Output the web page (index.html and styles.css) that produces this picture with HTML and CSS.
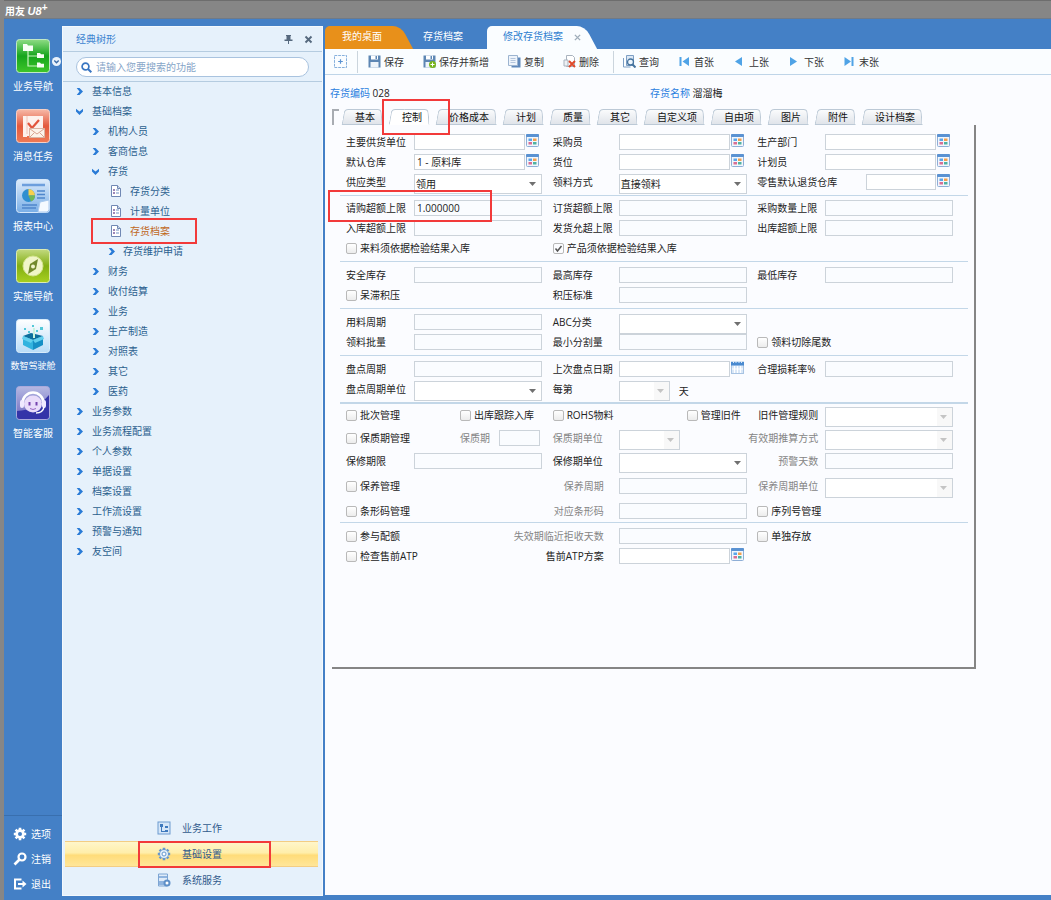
FILE: index.html
```html
<!DOCTYPE html>
<html lang="zh">
  <head>
    <meta charset="UTF-8" />
    <meta name="viewport" content="width=device-width, initial-scale=1.0" />
    <title>用友 U8+</title>
    <link rel="stylesheet" href="styles.css">
  </head>
  <body>
    <!-- 公用图标 -->
    <svg class="defs" width="0" height="0" aria-hidden="true">
      <symbol id="i-doc" viewBox="0 0 10 12">
        <path d="M.5 .5h6l3 3v8h-9z" fill="#fff" stroke="#7088b4" />
        <path d="M6.500 .5v3h3" fill="#cdd8ea" stroke="#7088b4" />
        <path d="M2 5h2M2 8h2" stroke="#7d5fa0" stroke-width="1.500" />
        <path d="M5 5h3M5 8h3" stroke="#6f92c2" />
      </symbol>
      <symbol id="i-grid" viewBox="0 0 13 13">
        <rect x=".5" y=".5" width="12" height="12" rx="1" fill="#f2f7fd" stroke="#8eaed6" />
        <rect width="13" height="3" rx="1" fill="#5a92d2" />
        <rect x="2.500" y="4.500" width="3.500" height="2.500" fill="#5aa5ea" />
        <rect x="7" y="4.500" width="3.500" height="2.500" fill="#f2a04e" />
        <rect x="2.500" y="8" width="3.500" height="2.500" fill="#d86f94" />
        <rect x="7" y="8" width="3.500" height="2.500" fill="#4fb1a2" />
      </symbol>
      <symbol id="i-save" viewBox="0 0 13 13">
        <path d="M.5 .5h12v12H.5z" fill="#5d86b3" />
        <path d="M3 .5h7v4H3z" fill="#fff" />
        <path d="M7.500 1h1.500v3H7.500z" fill="#5d86b3" />
        <path d="M2.500 7h8v5.500h-8z" fill="#eef4fa" />
      </symbol>
      <symbol id="i-gear" viewBox="0 0 14 14">
        <path d="M7 .8v12.400M.8 7h12.400M2.600 2.600l8.800 8.800M11.400 2.600l-8.800 8.800" stroke="currentColor" stroke-width="2.600" />
        <circle cx="7" cy="7" r="4.700" fill="currentColor" />
      </symbol>
    </svg>

    <header class="titlebar">用友 <b>U8<sup>+</sup></b></header>

    <div class="main">
      <!-- 左侧导航 -->
      <nav class="rail">
        <a class="rail-item" href="#">
          <svg viewBox="0 0 34 34">
            <defs>
              <linearGradient id="g1" x2="0" y2="1"><stop stop-color="#8fdc85" /><stop offset=".5" stop-color="#15a51c" /><stop offset="1" stop-color="#3fc62a" /></linearGradient>
            </defs>
            <rect x=".5" y=".5" width="33" height="33" rx="3" fill="url(#g1)" stroke="#c1e8c6" />
            <path d="M12 12v15h10M12 17h10" fill="none" stroke="#c9f5c0" stroke-width="1.200" />
            <path d="M7 5h4l1 1.500h5V12H7zM21 14h3l1 1.300h3V19h-7zM21 23.500h3l1 1.300h3v3.700h-7z" fill="#f8fff6" />
          </svg>
          <span>业务导航</span>
          <svg class="rail-more" viewBox="0 0 9 9"><circle cx="4.500" cy="4.500" r="4.500" fill="#e9f2fb" /><path d="M2.300 3.500l2.200 2.300 2.200-2.300" fill="none" stroke="#3b6ca8" stroke-width="1.400" /></svg>
        </a>
        <a class="rail-item" href="#">
          <svg viewBox="0 0 34 34">
            <defs>
              <linearGradient id="g2" x2="0" y2="1"><stop stop-color="#f7b9a8" /><stop offset=".5" stop-color="#e3593d" /><stop offset="1" stop-color="#ef7a55" /></linearGradient>
            </defs>
            <rect x=".5" y=".5" width="33" height="33" rx="3" fill="url(#g2)" stroke="#f7cfc4" />
            <path d="M7 7h4v21H7zM11 7h16v20H11z" fill="#fdf1ed" />
            <path d="M11 7v18" stroke="#f0c4b8" />
            <path d="M12 14l4 5 7-8" fill="none" stroke="#e2553d" stroke-width="2.200" />
            <path d="M13.500 19.500h15v9h-15z" fill="#fdf3ea" stroke="#d9b5a5" />
            <path d="M13.500 19.500l7.500 5.500 7.500-5.500M13.500 28.500l5-5M28.500 28.500l-5-5" fill="none" stroke="#d9a592" />
          </svg>
          <span>消息任务</span>
        </a>
        <a class="rail-item" href="#">
          <svg viewBox="0 0 34 34">
            <defs>
              <linearGradient id="g3" x2="0" y2="1"><stop stop-color="#dcebfb" /><stop offset="1" stop-color="#79aee6" /></linearGradient>
            </defs>
            <rect x=".5" y=".5" width="33" height="33" rx="3" fill="url(#g3)" stroke="#d5e7fa" />
            <path d="M6 6h23" stroke="#6d9fdd" stroke-width="2.500" />
            <path d="M21 12h8M21 15.500h8M21 19h8M6 26h15M6 29h14" stroke="#4f87cc" stroke-width="1.500" />
            <circle cx="12.500" cy="16.500" r="6.500" fill="#2f8fd0" />
            <path d="M12.500 16.500V10a6.500 6.500 0 0 1 6.500 6.500z" fill="#f7d04c" />
            <path d="M12.500 16.500H19a6.500 6.500 0 0 1-4 6z" fill="#71b855" />
            <path d="M22 33l2-10 9-2v10l-2 2z" fill="#f5faff" stroke="#a8c9ee" />
          </svg>
          <span>报表中心</span>
        </a>
        <a class="rail-item" href="#">
          <svg viewBox="0 0 34 34">
            <defs>
              <linearGradient id="g4" x2="0" y2="1"><stop stop-color="#c2d97f" /><stop offset=".5" stop-color="#82ae12" /><stop offset="1" stop-color="#a8d020" /></linearGradient>
            </defs>
            <rect x=".5" y=".5" width="33" height="33" rx="3" fill="url(#g4)" stroke="#dcebb2" />
            <circle cx="17" cy="17" r="10" fill="#f0f5c8" stroke="#d3e48e" />
            <path d="M22 10l-2 10-8 5 2-10z" fill="#71892a" />
            <circle cx="17" cy="17.500" r="2" fill="#f0f5c8" />
          </svg>
          <span>实施导航</span>
        </a>
        <a class="rail-item small" href="#">
          <svg viewBox="0 0 34 34">
            <defs>
              <linearGradient id="g5" x2="0" y2="1"><stop stop-color="#fff" /><stop offset="1" stop-color="#b9dcf7" /></linearGradient>
            </defs>
            <rect x=".5" y=".5" width="33" height="33" rx="3" fill="url(#g5)" stroke="#d8ecfb" />
            <path d="M7 17l10 4v10L7 26z" fill="#32b3df" />
            <path d="M17 21l10-4v9l-10 5z" fill="#168fc5" />
            <path d="M7 17l8-3 12 3-10 4z" fill="#0c6e9c" />
            <path d="M7 17l10 4-2 3-9-4zM27 17l-10 4 2 3 9-4z" fill="#62d0ee" />
            <path d="M8 9h2v2H8zM16 6h2v2h-2zM24 8h3v3h-3zM12 12h2v2h-2zM20 11h2v2h-2z" fill="#53c8d8" />
            <path d="M18 9v10" stroke="#c8f3dd" stroke-width="2" />
          </svg>
          <span>数智驾驶舱</span>
        </a>
        <a class="rail-item" href="#">
          <svg viewBox="0 0 34 34">
            <defs>
              <linearGradient id="g6" x2="0" y2="1"><stop stop-color="#b5b8e2" /><stop offset="1" stop-color="#6d68bf" /></linearGradient>
            </defs>
            <rect x=".5" y=".5" width="33" height="33" rx="3" fill="url(#g6)" stroke="#a9a9dc" />
            <path d="M1 25Q20 24 33 9v21q0 3-3 3H4q-3 0-3-3z" fill="#3434a8" />
            <ellipse cx="17" cy="18" rx="9" ry="8.500" fill="#e9dcfa" />
            <path d="M6.500 17a10.500 10.500 0 0 1 21 0" fill="none" stroke="#fff" stroke-width="2.500" />
            <rect x="4" y="14" width="4" height="8" rx="2" fill="#efe9ff" />
            <rect x="26" y="14" width="4" height="8" rx="2" fill="#efe9ff" />
            <path d="M13.500 16v3.500M20.500 16v3.500" stroke="#7542ae" stroke-width="2" />
            <path d="M14 22.500q3 2 6 0" fill="none" stroke="#9a68c5" />
            <path d="M28 21q-1 6-8 6" fill="none" stroke="#fff" stroke-width="1.500" />
          </svg>
          <span>智能客服</span>
        </a>
        <div class="rail-foot">
          <a href="#"><svg viewBox="0 0 14 14"><use href="#i-gear" /><circle cx="7" cy="7" r="2" fill="#4480c6" /></svg>选项</a>
          <a href="#"><svg viewBox="0 0 14 14"><circle cx="9" cy="5" r="3.500" fill="none" stroke="#fff" stroke-width="2.200" /><path d="M6.500 7.500L1.500 12.500" stroke="#fff" stroke-width="2.600" /></svg>注销</a>
          <a href="#"><svg viewBox="0 0 14 14"><path d="M8.500 2.500H2v9h6.500" fill="none" stroke="#fff" stroke-width="2" /><path d="M5 6h4.500V3.500L13.500 7l-4 3.500V8H5z" fill="#fff" /></svg>退出</a>
        </div>
      </nav>

      <!-- 功能树 -->
      <aside class="tree-panel">
        <div class="tree-head">
          <h2>经典树形</h2>
          <button type="button" aria-label="固定"><svg viewBox="0 0 9 9"><path d="M2 0h5v1H6.500v3.500H8.500V6h-8V4.500h2V1H2zM4 6h1v3H4z" fill="#56697e" /></svg></button>
          <button type="button" aria-label="关闭"><svg viewBox="0 0 9 9"><path d="M1.500 1.500l6 6M7.500 1.500l-6 6" stroke="#56697e" stroke-width="1.900" /></svg></button>
        </div>
        <div class="search">
          <label class="search-box">
            <svg viewBox="0 0 11 11"><circle cx="4.500" cy="4.500" r="3.400" fill="none" stroke="#3a76c2" stroke-width="1.700" /><path d="M7 7l3.300 3.300" stroke="#3a76c2" stroke-width="2" /></svg>
            <input type="text" aria-label="搜索功能" placeholder="请输入您要搜索的功能" />
          </label>
        </div>
        <ul class="tree">
          <li><a href="#">基本信息</a></li>
          <li class="open"><a href="#">基础档案</a>
            <ul>
              <li><a href="#">机构人员</a></li>
              <li><a href="#">客商信息</a></li>
              <li class="open"><a href="#">存货</a>
                <ul>
                  <li class="leaf"><a href="#"><svg><use href="#i-doc" /></svg>存货分类</a></li>
                  <li class="leaf"><a href="#"><svg><use href="#i-doc" /></svg>计量单位</a></li>
                  <li class="leaf current"><a href="#"><svg><use href="#i-doc" /></svg>存货档案</a><i class="mark mark-tree"></i></li>
                  <li><a href="#">存货维护申请</a></li>
                </ul>
              </li>
              <li><a href="#">财务</a></li>
              <li><a href="#">收付结算</a></li>
              <li><a href="#">业务</a></li>
              <li><a href="#">生产制造</a></li>
              <li><a href="#">对照表</a></li>
              <li><a href="#">其它</a></li>
              <li><a href="#">医药</a></li>
            </ul>
          </li>
          <li><a href="#">业务参数</a></li>
          <li><a href="#">业务流程配置</a></li>
          <li><a href="#">个人参数</a></li>
          <li><a href="#">单据设置</a></li>
          <li><a href="#">档案设置</a></li>
          <li><a href="#">工作流设置</a></li>
          <li><a href="#">预警与通知</a></li>
          <li><a href="#">友空间</a></li>
        </ul>
        <div class="groups">
          <a href="#"><svg viewBox="0 0 14 14"><rect x="1" y="1" width="12" height="12" fill="#d5e6f8" stroke="#6d9bd0" /><path d="M3 3h3v3H3zM8 5h3v2H8zM8 9h3v2H8zM4 6h1v4h3v1H4z" fill="#3e79bd" /></svg>业务工作</a>
          <a class="selected" href="#"><svg viewBox="0 0 14 14" color="#6698cf"><use href="#i-gear" /><circle cx="7" cy="7" r="4" fill="#e3eefa" /><circle cx="7" cy="7" r="2" fill="#fff" stroke="#6698cf" /></svg>基础设置<i class="mark mark-group"></i></a>
          <a href="#"><svg viewBox="0 0 14 14"><path d="M1.500 1h9v12h-9z" fill="#dfebf8" stroke="#7da5d3" /><path d="M2 3h8v2H2zM2 8h8v4H2z" fill="#8fb4df" /><circle cx="10" cy="10" r="3.500" fill="#5f90c8" /><circle cx="10" cy="10" r="1.500" fill="#fff" /></svg>系统服务</a>
        </div>
      </aside>

      <!-- 工作区 -->
      <section class="work">
        <nav class="tabs">
          <a class="tab home" href="#">我的桌面</a>
          <a class="tab" href="#">存货档案</a>
          <a class="tab active" href="#">修改存货档案 <svg viewBox="0 0 8 8"><path d="M1 1l6 6M7 1L1 7" stroke="#9fadb9" stroke-width="1.600" /></svg></a>
        </nav>

        <div class="sheet">
          <div class="toolbar">
            <button type="button" class="add" aria-label="新增"><svg viewBox="0 0 14 14"><rect x=".5" y=".5" width="13" height="13" fill="none" stroke="#78a6d8" stroke-dasharray="3 1" /><path d="M7 4.500v5M4.500 7h5" stroke="#5a92d2" stroke-width="1.300" /></svg></button>
            <div class="tools">
              <button type="button"><svg><use href="#i-save" /></svg>保存</button>
              <button type="button"><svg viewBox="0 0 13 13"><use href="#i-save" /><circle cx="9.500" cy="9.500" r="3.500" fill="#79b51c" /><path d="M9.500 7.500v4M7.500 9.500h4" stroke="#fff" /></svg>保存并新增</button>
              <button type="button"><svg viewBox="0 0 13 13"><path d="M3.500 2.500h9v10h-9z" fill="#5f88ba" /><path d="M.5 .5h9v10h-9z" fill="#eef4fb" stroke="#9cb4d0" /><path d="M2.500 3.500h5M2.500 5.500h5M2.500 7.500h5" stroke="#b3c5dc" /></svg>复制</button>
              <button type="button"><svg viewBox="0 0 13 13"><path d="M3.500 .5h6l2 2v9h-8z" fill="#fff" stroke="#a9b3be" /><path d="M1 5h4v6H1z" fill="#eef1f4" stroke="#a9b3be" /><path d="M6 6l6 6M12 6l-6 6" stroke="#df4a2b" stroke-width="2" /></svg>删除</button>
            </div>
            <div class="tools nav">
              <button type="button"><svg viewBox="0 0 13 13"><path d="M3.500 .5h7v10h-7z" fill="#dce8f5" stroke="#7d9fc4" /><path d="M.5 3v9h7" fill="none" stroke="#7d9fc4" /><circle cx="7.500" cy="7" r="3" fill="#eef6fd" stroke="#47759f" stroke-width="1.300" /><path d="M9.500 9.500l3 3" stroke="#47759f" stroke-width="2" /></svg>查询</button>
              <button type="button"><svg viewBox="0 0 13 13"><path d="M1.500 2h2v9h-2zM11 2v9L4.500 6.500z" fill="#4fa3e6" /></svg>首张</button>
              <button type="button"><svg viewBox="0 0 13 13"><path d="M9 2v9L2 6.500z" fill="#4fa3e6" /></svg>上张</button>
              <button type="button"><svg viewBox="0 0 13 13"><path d="M2 2v9l7-4.500z" fill="#4fa3e6" /></svg>下张</button>
              <button type="button"><svg viewBox="0 0 13 13"><path d="M1.500 2v9L8 6.500zM8.500 2h2v9h-2z" fill="#4fa3e6" /></svg>末张</button>
            </div>
          </div>

          <div class="summary">
            <div><span>存货编码</span> 028</div>
            <div><span>存货名称</span> 溜溜梅</div>
          </div>

          <div class="card">
            <div class="card-tabs">
              <button type="button">基本</button>
              <button type="button" class="on">控制<i class="mark mark-tab"></i></button>
              <button type="button">价格成本</button>
              <button type="button">计划</button>
              <button type="button">质量</button>
              <button type="button">其它</button>
              <button type="button">自定义项</button>
              <button type="button">自由项</button>
              <button type="button">图片</button>
              <button type="button">附件</button>
              <button type="button">设计档案</button>
            </div>

            <form class="card-body">
              <div class="section">
                <div class="row">
                  <div class="cell"><label for="vendor">主要供货单位</label><input type="text" id="vendor" class="ref" /><button type="button" class="pick" aria-label="参照"><svg><use href="#i-grid" /></svg></button></div>
                  <div class="cell"><label for="buyer">采购员</label><input type="text" id="buyer" class="ref" /><button type="button" class="pick" aria-label="参照"><svg><use href="#i-grid" /></svg></button></div>
                  <div class="cell"><label for="dept">生产部门</label><input type="text" id="dept" class="ref" /><button type="button" class="pick" aria-label="参照"><svg><use href="#i-grid" /></svg></button></div>
                </div>
                <div class="row">
                  <div class="cell"><label for="whouse">默认仓库</label><input type="text" id="whouse" class="ref" value="1 - 原料库" /><button type="button" class="pick" aria-label="参照"><svg><use href="#i-grid" /></svg></button></div>
                  <div class="cell"><label for="position">货位</label><input type="text" id="position" class="ref" /><button type="button" class="pick" aria-label="参照"><svg><use href="#i-grid" /></svg></button></div>
                  <div class="cell"><label for="planner">计划员</label><input type="text" id="planner" class="ref" /><button type="button" class="pick" aria-label="参照"><svg><use href="#i-grid" /></svg></button></div>
                </div>
                <div class="row">
                  <div class="cell"><label for="supply">供应类型</label><select id="supply"><option>领用</option></select></div>
                  <div class="cell"><label for="issue">领料方式</label><select id="issue"><option>直接领料</option></select></div>
                  <div class="cell"><label for="retail" class="long">零售默认退货仓库</label><input type="text" id="retail" class="ref short-ref" /><button type="button" class="pick" aria-label="参照"><svg><use href="#i-grid" /></svg></button></div>
                </div>
              </div>

              <div class="section upper">
                <div class="row">
                  <div class="cell"><label for="reqLimit">请购超额上限</label><input type="text" id="reqLimit" class="num" value="1.000000" /><i class="mark mark-field"></i></div>
                  <div class="cell"><label for="orderLimit">订货超额上限</label><input type="text" id="orderLimit" class="num" /></div>
                  <div class="cell"><label for="buyLimit">采购数量上限</label><input type="text" id="buyLimit" class="num" /></div>
                </div>
                <div class="row">
                  <div class="cell"><label for="inLimit">入库超额上限</label><input type="text" id="inLimit" class="num" /></div>
                  <div class="cell"><label for="sendLimit">发货允超上限</label><input type="text" id="sendLimit" class="num" /></div>
                  <div class="cell"><label for="outLimit">出库超额上限</label><input type="text" id="outLimit" class="num" /></div>
                </div>
                <div class="row">
                  <div class="cell"><label class="check"><input type="checkbox" />来料须依据检验结果入库</label></div>
                  <div class="cell"><label class="check"><input type="checkbox" checked />产品须依据检验结果入库</label></div>
                </div>
              </div>

              <div class="section">
                <div class="row">
                  <div class="cell"><label for="safe">安全库存</label><input type="text" id="safe" class="num" /></div>
                  <div class="cell"><label for="max">最高库存</label><input type="text" id="max" class="num" /></div>
                  <div class="cell"><label for="min">最低库存</label><input type="text" id="min" class="num" /></div>
                </div>
                <div class="row">
                  <div class="cell"><label class="check"><input type="checkbox" />呆滞积压</label></div>
                  <div class="cell"><label for="overstock">积压标准</label><input type="text" id="overstock" class="num" /></div>
                </div>
              </div>

              <div class="section">
                <div class="row">
                  <div class="cell"><label for="useCycle">用料周期</label><input type="text" id="useCycle" class="num" /></div>
                  <div class="cell"><label for="abc">ABC分类</label><select id="abc"><option></option></select></div>
                </div>
                <div class="row">
                  <div class="cell"><label for="batchQty">领料批量</label><input type="text" id="batchQty" class="num" /></div>
                  <div class="cell"><label for="minCut">最小分割量</label><input type="text" id="minCut" class="num" /></div>
                  <div class="cell"><label class="check"><input type="checkbox" />领料切除尾数</label></div>
                </div>
              </div>

              <div class="section thick">
                <div class="row">
                  <div class="cell"><label for="countCycle">盘点周期</label><input type="text" id="countCycle" class="num" /></div>
                  <div class="cell"><label for="lastCount">上次盘点日期</label><input type="text" id="lastCount" class="ref" /><button type="button" class="pick" aria-label="日期"><svg viewBox="0 0 13 13"><rect x=".5" y="1" width="12" height="11.500" fill="#d9e7f7" stroke="#a8c3e2" /><path d="M0 1h13v3.500H0z" fill="#4a8ad0" /><path d="M2.500 0v2M5 0v2M8 0v2M10.500 0v2" stroke="#dcebf9" /><path d="M3.500 5v7M6.500 5v7M9.500 5v7M1 8h11" stroke="#fff" /></svg></button></div>
                  <div class="cell"><label for="loss">合理损耗率%</label><input type="text" id="loss" class="num" /></div>
                </div>
                <div class="row">
                  <div class="cell"><label for="countUnit">盘点周期单位</label><select id="countUnit"><option></option></select></div>
                  <div class="cell"><label for="every">每第</label><select id="every" class="w-day" disabled><option></option></select><span class="unit">天</span></div>
                </div>
              </div>

              <div class="section manage">
                <div class="row">
                  <div class="cell"><label class="check lead"><input type="checkbox" />批次管理</label><label class="check"><input type="checkbox" />出库跟踪入库</label></div>
                  <div class="cell"><label class="check lead-wide"><input type="checkbox" />ROHS物料</label><label class="check"><input type="checkbox" />管理旧件</label></div>
                  <div class="cell"><label for="oldRule" class="right">旧件管理规则</label><select id="oldRule" disabled><option></option></select></div>
                </div>
                <div class="row">
                  <div class="cell"><label class="check lead"><input type="checkbox" />保质期管理</label><label for="shelf" class="tight off">保质期</label><input type="text" id="shelf" class="num w-tiny" disabled /></div>
                  <div class="cell"><label for="shelfUnit" class="off">保质期单位</label><select id="shelfUnit" class="w-unit" disabled><option></option></select></div>
                  <div class="cell"><label for="validWay" class="right off">有效期推算方式</label><select id="validWay" disabled><option></option></select></div>
                </div>
                <div class="row">
                  <div class="cell"><label for="repair">保修期限</label><input type="text" id="repair" class="num" /></div>
                  <div class="cell"><label for="repairUnit">保修期单位</label><select id="repairUnit"><option></option></select></div>
                  <div class="cell"><label for="warnDays" class="right off">预警天数</label><input type="text" id="warnDays" class="num" disabled /></div>
                </div>
                <div class="row">
                  <div class="cell"><label class="check"><input type="checkbox" />保养管理</label></div>
                  <div class="cell"><label for="careCycle" class="right far off">保养周期</label><input type="text" id="careCycle" class="num" disabled /></div>
                  <div class="cell"><label for="careUnit" class="right off">保养周期单位</label><select id="careUnit" disabled><option></option></select></div>
                </div>
                <div class="row">
                  <div class="cell"><label class="check"><input type="checkbox" />条形码管理</label></div>
                  <div class="cell"><label for="barcode" class="right far off">对应条形码</label><input type="text" id="barcode" class="num" disabled /></div>
                  <div class="cell"><label class="check"><input type="checkbox" />序列号管理</label></div>
                </div>
              </div>

              <div class="section">
                <div class="row">
                  <div class="cell"><label class="check"><input type="checkbox" />参与配额</label></div>
                  <div class="cell"><label for="rejectDays" class="right far off">失效期临近拒收天数</label><input type="text" id="rejectDays" class="num" disabled /></div>
                  <div class="cell"><label class="check"><input type="checkbox" />单独存放</label></div>
                </div>
                <div class="row">
                  <div class="cell"><label class="check"><input type="checkbox" />检查售前ATP</label></div>
                  <div class="cell"><label for="atp" class="right far">售前ATP方案</label><input type="text" id="atp" class="ref" /><button type="button" class="pick" aria-label="参照"><svg><use href="#i-grid" /></svg></button></div>
                </div>
              </div>
            </form>
          </div>
        </div>
      </section>
    </div>
  </body>
</html>
```
FILE: styles.css
```css
* {
  box-sizing: border-box;
}
body {
  display: flex;
  flex-direction: column;
  min-height: 100vh;
  margin: 0;
  padding-left: 4px;
  background-color: #868686;
  color: #222;
  font: 10px/16px "Open Sans", "Noto Sans CJK SC", sans-serif;
}
a {
  color: inherit;
  text-decoration: none;
}
ul {
  margin: 0;
  padding: 0;
  list-style: none;
}
button,
input,
select {
  margin: 0;
  padding: 0;
  border: none;
  background: none;
  color: inherit;
  font: inherit;
}
svg {
  display: block;
  flex: none;
}
.defs {
  position: absolute;
}

/* 标题栏 */
.titlebar {
  height: 19px;
  padding-left: 1px;
  border-top: 1px solid #6d6d6d;
  border-bottom: 1px solid #6f7a88;
  color: #fff;
  font-weight: bold;
  line-height: 20px;
}
.titlebar b {
  font-family: "Liberation Sans", sans-serif;
  font-size: 11px;
  font-style: italic;
}
.titlebar sup {
  font-size: 10px;
  font-style: normal;
  line-height: 0;
  vertical-align: 4px;
}

.main {
  display: flex;
  flex: 1;
  padding-bottom: 4px;
  background-color: #4480c6;
}

/* 左侧导航 */
.rail {
  display: flex;
  flex-direction: column;
  width: 58px;
  padding-top: 20px;
  color: #fff;
}
.rail-item {
  position: relative;
  display: flex;
  flex-direction: column;
  align-items: center;
  gap: 5px;
  height: 70px;
  white-space: nowrap;
}
.rail-item > svg:first-child {
  width: 34px;
  height: 34px;
}
.rail-item.small {
  height: 67px;
  font-size: 9px;
}
.rail-more {
  position: absolute;
  top: 18px;
  right: 1px;
  width: 9px;
  height: 9px;
}
.rail-foot {
  margin-top: auto;
  padding: 5px 0 0 9px;
  border-top: 1px solid #396fae;
}
.rail-foot a {
  display: flex;
  align-items: center;
  gap: 4px;
  height: 25px;
}
.rail-foot svg {
  width: 14px;
  height: 14px;
}

/* 功能树 */
.tree-panel {
  display: flex;
  flex-direction: column;
  width: 261px;
  margin-top: 7px;
  border: 1px solid #f4f9fd;
  background-color: #e6f1fb;
  color: #2b5f8e;
}
.tree-head {
  display: flex;
  align-items: center;
  gap: 11px;
  height: 25px;
  padding: 0 9px 0 13px;
  border-bottom: 1px solid #b5cce0;
}
.tree-head h2 {
  flex: 1;
  margin: 0;
  color: #3c83d0;
  font-size: 10px;
  font-weight: normal;
}
.tree-head svg {
  width: 9px;
  height: 9px;
}
.search {
  padding: 5px 13px 4px;
  border-bottom: 1px solid #b5cce0;
}
.search-box {
  display: flex;
  align-items: center;
  gap: 4px;
  height: 20px;
  padding: 0 4px;
  border: 1px solid #a9c3df;
  border-radius: 10px;
  background-color: #fff;
}
.search-box svg {
  width: 11px;
  height: 11px;
}
.search-box input {
  flex: 1;
  outline: none;
}
.search-box input::placeholder {
  color: #86a5c8;
}
.tree {
  flex: 1;
  margin-top: -1px;
  padding-left: 14px;
}
.tree ul {
  padding-left: 16px;
}
.tree li {
  position: relative;
}
.tree a {
  display: flex;
  align-items: center;
  height: 20px;
}
/* 展开箭头 */
.tree a::before {
  content: "";
  width: 5px;
  height: 5px;
  margin-right: 10px;
  background: linear-gradient(#2a7bd6, #2a7bd6);
  clip-path: polygon(10% 0, 50% 0, 100% 50%, 50% 100%, 10% 100%, 50% 50%);
  transform: scale(1.4);
}
.tree .open > a::before {
  transform: rotate(90deg) scale(1.4);
}
.tree ul ul a::before {
  margin-right: 9px;
}
.tree .leaf a::before {
  display: none;
}
.tree .leaf svg {
  width: 10px;
  height: 12px;
  margin: 0 9px 0 2px;
}
.tree .current {
  color: #c0681c;
}

.groups {
  padding: 0 4px 2px 2px;
}
.groups a {
  position: relative;
  display: flex;
  align-items: center;
  gap: 11px;
  height: 26px;
  padding-left: 92px;
  color: #315a8c;
}
.groups .selected {
  border: solid #f3cd83;
  border-width: 1px 0;
  background: linear-gradient(#fff6ca, #ffeeaa 45%, #ffdc79 55%, #ffe699);
}
.groups svg {
  width: 14px;
  height: 14px;
}

/* 页签 */
.work {
  display: flex;
  flex: 1;
  flex-direction: column;
  min-width: 0;
  margin: 7px 0 1px 2px;
}
.tabs {
  display: flex;
  height: 23px;
}
.tab {
  position: relative;
  z-index: 0;
  width: 81px;
  padding: 0 17px;
  color: #fff;
  line-height: 21px;
  white-space: nowrap;
}
.tab.home::before,
.tab.active::before,
.tab.home::after,
.tab.active::after {
  content: "";
  position: absolute;
  z-index: -1;
  inset: 0 14px 0 0;
  border-radius: 5px 0 0 0;
  background-color: #e8901a;
}
.tab.home::after,
.tab.active::after {
  inset: 0 -1px 0 auto;
  width: 24px;
  border-radius: 0 8px 0 0;
  transform: skewX(28deg);
}
.tab.active {
  width: 103px;
  padding: 0 16px;
  color: #2f7fd0;
}
.tab.active::before,
.tab.active::after {
  background-color: #fafdff;
}
.tab.active svg {
  display: inline-block;
  width: 7px;
  height: 7px;
  margin-left: 8px;
  vertical-align: -1px;
}

.sheet {
  flex: 1;
  background-color: #fbfcff;
}

/* 工具栏 */
.toolbar {
  display: flex;
  align-items: center;
  height: 26px;
  border-bottom: 1px solid #bfd5e8;
  background-color: #fafdff;
  color: #333;
}
.toolbar svg {
  width: 13px;
  height: 13px;
}
.toolbar button {
  display: flex;
  align-items: center;
  gap: 3px;
  white-space: nowrap;
}
.add {
  margin: 0 10px 0 9px;
}
.tools {
  display: flex;
  align-items: center;
  gap: 19px;
  height: 22px;
  padding: 0 14px 0 10px;
  border-left: 1px solid #cbd5dd;
}
.tools.nav {
  padding: 0 9px;
}

.summary {
  display: grid;
  grid-template-columns: 320px 1fr;
  padding: 10px 5px 8px;
}
.summary span {
  color: #2a80e0;
}

/* 存货卡片 */
.card {
  margin: 0 75px 0 7px;
}
.card-tabs {
  display: flex;
  gap: 7px;
  height: 16px;
  padding-left: 8px;
  border-left: 2px solid #a8acb2;
  background: linear-gradient(#a8acb2, #a8acb2) 0 0 / 5px 2px no-repeat;
}
.card-tabs button {
  position: relative;
  z-index: 0;
  padding: 0 7px 0 13px;
  color: #111;
  line-height: 15px;
  white-space: nowrap;
}
.card-tabs button::before,
.card-tabs button::after {
  content: "";
  position: absolute;
  z-index: -1;
  inset: 0 50% 0 1px;
  border: solid #bcc9d6;
  border-width: 1px 0 1px 1px;
  border-radius: 4px 0 0 0;
  background: linear-gradient(#fafbfc, #e0e4ea);
  transform: skewX(-10deg);
}
.card-tabs button::after {
  inset: 0 0 0 40%;
  border-width: 1px 1px 1px 0;
  border-radius: 0 4px 0 0;
  transform: skewX(4deg);
}
.card-tabs .on::before,
.card-tabs .on::after {
  border-bottom-color: #fff;
  background: #fff;
}
.card-tabs .on {
  z-index: 1;
}
.card-body {
  min-height: 544px;
  padding: 9px 6px 0 8px;
  border: solid #858585;
  border-width: 0 2px 2px 0;
}
.section {
  padding: 5px 0 1px 6px;
  border-bottom: 1px solid #c3d7e8;
}
.section:first-child {
  padding-top: 0;
}
.section.upper {
  padding-top: 4px;
}
.section.thick {
  border-bottom-width: 2px;
}
.section:last-child {
  border-bottom: none;
}
.row {
  display: grid;
  grid-template-columns: 207fr 205fr 211fr;
  height: 20px;
}
.manage {
  padding: 3px 0 0 6px;
}
.manage .row {
  height: 23px;
}
.manage .row:nth-child(n + 3) {
  height: 25px;
}
.manage .row:last-child {
  height: 19px;
}
.cell {
  position: relative;
  display: flex;
  align-items: flex-start;
  min-width: 0;
  white-space: nowrap;
}
.cell > label {
  flex: none;
  width: 68px;
}
.cell:nth-child(2) > label {
  width: 66px;
}
.cell > label.long {
  width: 109px;
}
.cell > label.right {
  display: flex;
  justify-content: flex-end;
  padding-right: 7px;
}
.cell > label.far {
  padding-right: 15px;
}
.cell > label.off {
  color: #858585;
}
.cell > label.tight {
  width: 39px;
}
.cell > label.check {
  display: flex;
  align-items: center;
  gap: 3px;
  width: auto;
}
.cell > label.lead {
  width: 114px;
}
.cell:nth-child(2) > label.lead-wide {
  width: 134px;
}
.cell > input,
.cell > select {
  width: 128px;
  height: 16px;
  padding-left: 2px;
  border: 1px solid #ccd3da;
  background-color: #fff;
}
.cell > input.num {
  background-color: #fafcff;
}
.cell > input.ref {
  width: 111px;
}
.cell > input.short-ref {
  width: 70px;
}
.cell > input.w-tiny {
  width: 41px;
}
.cell > select {
  height: 20px;
  padding-left: 1px;
  border-radius: 0;
  appearance: none;
  background: #fff url("data:image/svg+xml,%3Csvg xmlns='http://www.w3.org/2000/svg' width='7' height='4'%3E%3Cpath d='M0 0h7L3.500 4z' fill='%23707070'/%3E%3C/svg%3E") no-repeat right 5px center;
}
.cell > select:disabled {
  background-image: url("data:image/svg+xml,%3Csvg xmlns='http://www.w3.org/2000/svg' width='7' height='4'%3E%3Cpath d='M0 0h7L3.500 4z' fill='%23c4c4c4'/%3E%3C/svg%3E"), linear-gradient(#f8f8f8, #f8f8f8);
  background-position: right 5px center, right;
  background-repeat: no-repeat;
  background-size: 7px 4px, 15px 100%;
  opacity: 1;
}
.cell > select.w-day {
  width: 51px;
}
.cell > select.w-unit {
  width: 61px;
}
.unit {
  padding-left: 9px;
  line-height: 20px;
}
.pick {
  margin-left: 1px;
}
.pick svg {
  width: 13px;
  height: 13px;
}
.check input {
  width: 11px;
  height: 11px;
  border: 1px solid #b9b9b9;
  border-radius: 2px;
  appearance: none;
  background: linear-gradient(#fff, #ececec);
}
.check input:checked {
  background: url("data:image/svg+xml,%3Csvg xmlns='http://www.w3.org/2000/svg' width='9' height='9'%3E%3Cpath d='M1.500 4.500l2 2.500 4-5' fill='none' stroke='%23555' stroke-width='1.500'/%3E%3C/svg%3E") center no-repeat;
}

/* 红色标注框 */
.mark {
  position: absolute;
  z-index: 2;
  border: 2px solid #f23a3a;
  pointer-events: none;
}
.mark-tree {
  top: -3px;
  left: -18px;
  width: 106px;
  height: 26px;
}
.mark-group {
  top: -1px;
  left: 73px;
  width: 133px;
  height: 27px;
}
.mark-tab {
  top: -10px;
  left: -7px;
  width: 68px;
  height: 36px;
}
.mark-field {
  top: -10px;
  left: -18px;
  width: 164px;
  height: 32px;
}
```
